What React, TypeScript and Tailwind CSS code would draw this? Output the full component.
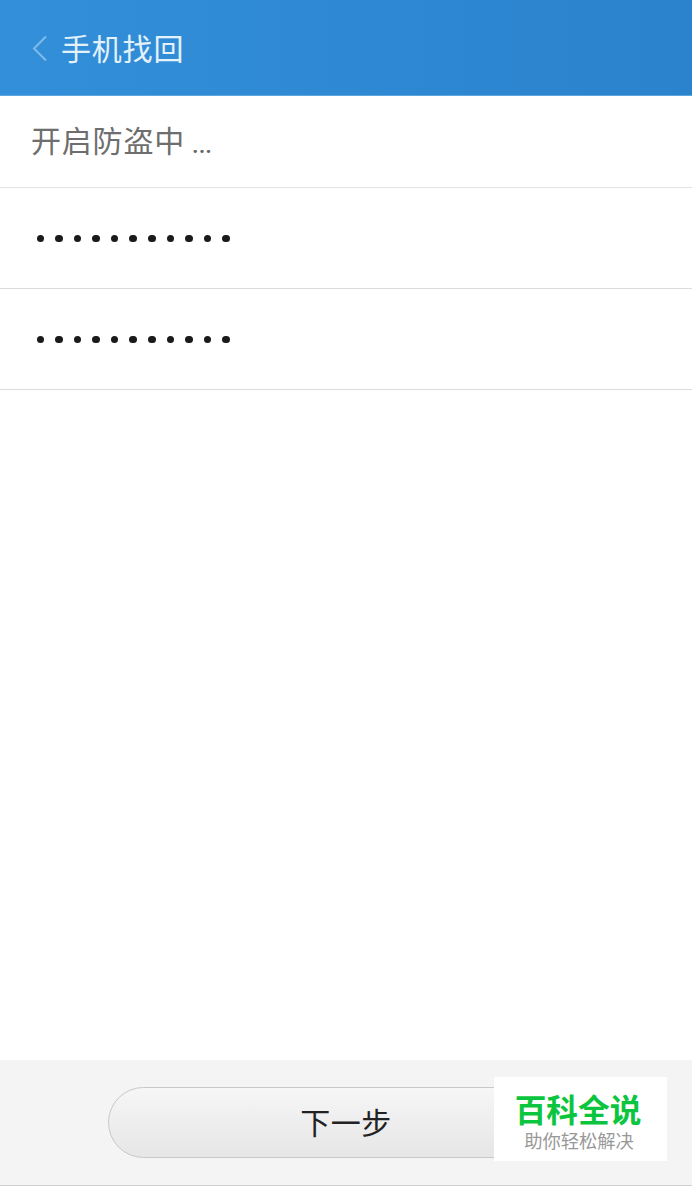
const FONT = "font-['Roboto','Noto_Sans_CJK_SC',sans-serif]";

function PasswordRow() {
  return (
    <div className="h-[101px] flex items-center pl-[36.5px] pt-[1px] border-b border-[#dcdcdc] bg-white">
      <div className="flex gap-[11.1px]">
        {Array.from({ length: 11 }).map((_, i) => (
          <span key={i} className="w-[7.5px] h-[7.5px] rounded-full bg-[#1a1a1a]" />
        ))}
      </div>
    </div>
  );
}

export default function App() {
  return (
    <div className={`relative w-[692px] h-[1186px] flex flex-col bg-white overflow-hidden ${FONT}`}>
      <header className="h-[96px] shrink-0 flex items-center pl-[32px] bg-gradient-to-r from-[#338fd9] to-[#2b82cd] border-b border-[#5ea6e0]">
        <svg width="15" height="27" viewBox="0 0 15 27" fill="none" className="mr-[16px] mt-[2px]">
          <path d="M14 1.5 L2 13.5 L14 25.5" stroke="#7fbaea" strokeWidth="2" />
        </svg>
        <h1 className="text-[30px] leading-none text-[#e3f1fb] tracking-[0.8px] ml-[-2px] mt-[5px]">手机找回</h1>
      </header>

      <div className="h-[92px] shrink-0 flex items-center pl-[31px] border-b border-[#e2e2e2]">
        <span className="text-[30px] leading-none text-[#6e6e6e] tracking-[0.8px]">开启防盗中</span>
        <span className="text-[24px] leading-none font-medium text-[#666666] ml-[7px] mt-[6px]">...</span>
      </div>
      <PasswordRow />
      <PasswordRow />

      <div className="flex-1" />

      <footer className="h-[126px] shrink-0 flex items-center justify-center bg-[#f4f4f4] border-b border-[#cfcfcf]">
        <button className="w-[476px] h-[71px] pt-[3px] rounded-[36px] border border-[#c8c8c8] bg-gradient-to-b from-[#f6f6f6] to-[#e6e6e6] text-[30px] leading-none tracking-[0.5px] text-[#222222]">
          下一步
        </button>
      </footer>

      <div className="absolute left-[494px] top-[1077px] w-[173px] h-[84px] bg-white flex flex-col items-center pt-[16px]">
        <span className="text-[31.7px] leading-[38px] font-bold text-[#0cc53e] ml-[-5px]">百科全说</span>
        <span className="text-[18.3px] leading-[20px] text-[#999999] mt-[1px] ml-[-3px]">助你轻松解决</span>
      </div>
    </div>
  );
}
